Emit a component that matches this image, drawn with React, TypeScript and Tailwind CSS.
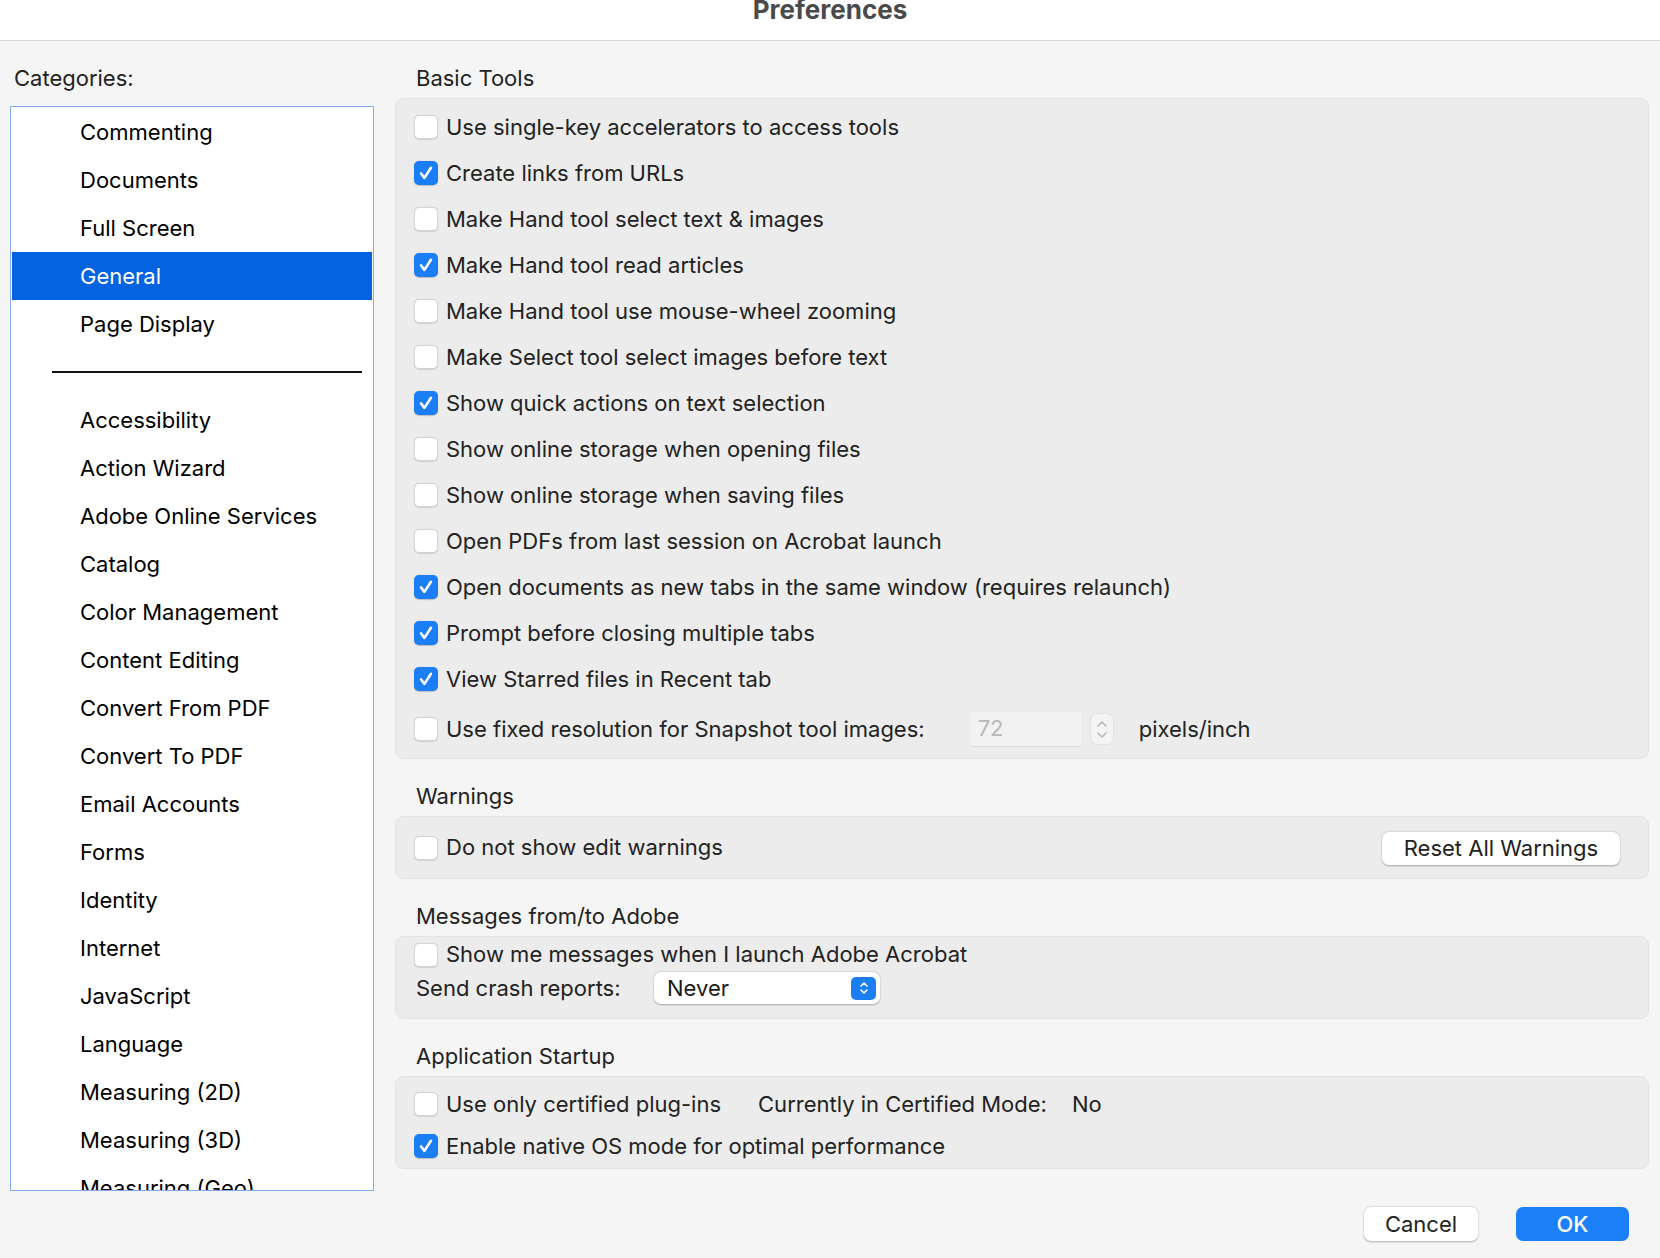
import React, { useState } from "react";

type Option = { label: string; checked: boolean };

const topCategories = ["Commenting", "Documents", "Full Screen", "General", "Page Display"];
const moreCategories = [
    "Accessibility",
    "Action Wizard",
    "Adobe Online Services",
    "Catalog",
    "Color Management",
    "Content Editing",
    "Convert From PDF",
    "Convert To PDF",
    "Email Accounts",
    "Forms",
    "Identity",
    "Internet",
    "JavaScript",
    "Language",
    "Measuring (2D)",
    "Measuring (3D)",
    "Measuring (Geo)",
];

const basicTools: Option[] = [
    { label: "Use single-key accelerators to access tools", checked: false },
    { label: "Create links from URLs", checked: true },
    { label: "Make Hand tool select text & images", checked: false },
    { label: "Make Hand tool read articles", checked: true },
    { label: "Make Hand tool use mouse-wheel zooming", checked: false },
    { label: "Make Select tool select images before text", checked: false },
    { label: "Show quick actions on text selection", checked: true },
    { label: "Show online storage when opening files", checked: false },
    { label: "Show online storage when saving files", checked: false },
    { label: "Open PDFs from last session on Acrobat launch", checked: false },
    { label: "Open documents as new tabs in the same window (requires relaunch)", checked: true },
    { label: "Prompt before closing multiple tabs", checked: true },
    { label: "View Starred files in Recent tab", checked: true },
];

const Checkbox = ({ checked }: { checked: boolean }) =>
    checked ? (
        <span className="w-[24px] h-[24px] shrink-0 rounded-[5px] bg-[#1b7ef5] flex items-center justify-center shadow-[0_0.5px_1px_rgba(0,0,0,0.2)]">
            <svg width="18" height="18" viewBox="0 0 16 16">
                <path
                    d="M3.6 8.4l3 3.9L12.4 3.4"
                    fill="none"
                    stroke="#fff"
                    strokeWidth="2.3"
                    strokeLinecap="round"
                    strokeLinejoin="round"
                />
            </svg>
        </span>
    ) : (
        <span className="w-[24px] h-[24px] shrink-0 rounded-[5px] bg-white border border-[#d4d4d4] shadow-[0_0.5px_1px_rgba(0,0,0,0.12)]" />
    );

const CheckRow = ({ label, checked, className = "h-[46px]" }: Option & { className?: string }) => (
    <div className={`flex items-center gap-[8px] ${className}`}>
        <Checkbox checked={checked} />
        <span>{label}</span>
    </div>
);

const GroupLabel = ({ children }: { children: React.ReactNode }) => (
    <div className="h-[28px] flex items-center pl-[21px]">{children}</div>
);

const Stepper = () => (
    <span className="w-[24px] h-[32px] rounded-[7px] bg-[#f4f4f4] border border-[#e2e2e2] flex flex-col items-center justify-center gap-[3px]">
        <svg width="12" height="8" viewBox="0 0 12 8">
            <path d="M2 6l4-4 4 4" fill="none" stroke="#b4b4b4" strokeWidth="1.5" strokeLinecap="round" />
        </svg>
        <svg width="12" height="8" viewBox="0 0 12 8">
            <path d="M2 2l4 4 4-4" fill="none" stroke="#b4b4b4" strokeWidth="1.5" strokeLinecap="round" />
        </svg>
    </span>
);

const SelectArrows = () => (
    <span className="w-[25px] h-[23px] rounded-[5px] bg-[#1b7ef5] flex flex-col items-center justify-center gap-[2px]">
        <svg width="10" height="6" viewBox="0 0 10 6">
            <path d="M2 5l3-3 3 3" fill="none" stroke="#fff" strokeWidth="1.6" strokeLinecap="round" strokeLinejoin="round" />
        </svg>
        <svg width="10" height="6" viewBox="0 0 10 6">
            <path d="M2 1l3 3 3-3" fill="none" stroke="#fff" strokeWidth="1.6" strokeLinecap="round" strokeLinejoin="round" />
        </svg>
    </span>
);

const App = () => {
    const [active, setActive] = useState("General");

    return (
        <div className="w-[1660px] h-[1258px] overflow-hidden bg-[#f5f5f5] font-[Inter,sans-serif] text-[22px] text-[#222] flex flex-col">
            <div className="h-[41px] shrink-0 bg-white border-b border-[#d6d6d6] flex justify-center">
                <span className="text-[26px] leading-none font-bold text-[#4a4a4a] -mt-[3px]">Preferences</span>
            </div>

            <div className="flex flex-1 pt-[23px] pl-[10px] pr-[11px]">
                {/* categories */}
                <div className="w-[364px] shrink-0 flex flex-col">
                    <div className="h-[28px] flex items-center pl-[4px]">Categories:</div>
                    <div className="mt-[14px] h-[1085px] bg-white border border-[#80acef] p-[1px] overflow-hidden text-black">
                        {topCategories.map(name => (
                            <div
                                key={name}
                                onClick={() => setActive(name)}
                                className={`h-[48px] flex items-center pl-[68px] cursor-default ${
                                    active === name ? "bg-[#0463e1] text-white" : ""
                                }`}
                            >
                                {name}
                            </div>
                        ))}
                        <div className="h-[48px] flex items-center pl-[40px] pr-[10px]">
                            <div className="h-[2px] w-full bg-[#111]" />
                        </div>
                        {moreCategories.map(name => (
                            <div
                                key={name}
                                onClick={() => setActive(name)}
                                className={`h-[48px] flex items-center pl-[68px] cursor-default ${
                                    active === name ? "bg-[#0463e1] text-white" : ""
                                }`}
                            >
                                {name}
                            </div>
                        ))}
                    </div>
                </div>

                {/* settings */}
                <div className="flex-1 ml-[21px] flex flex-col">
                    <GroupLabel>Basic Tools</GroupLabel>
                    <div className="mt-[6px] rounded-[9px] bg-[#ececec] border border-[#e3e3e3] pt-[5px] pb-[6px] pl-[18px]">
                        {basicTools.map(o => (
                            <CheckRow key={o.label} {...o} />
                        ))}
                        <div className="mt-[4px] h-[46px] flex items-center">
                            <CheckRow label="Use fixed resolution for Snapshot tool images:" checked={false} />
                            <span className="ml-[46px] w-[110px] h-[35px] bg-[#f2f2f2] border-b border-[#d9d9d9] flex items-center pl-[7px] text-[#b8b8b8]">
                                72
                            </span>
                            <span className="ml-[9px]">
                                <Stepper />
                            </span>
                            <span className="ml-[25px]">pixels/inch</span>
                        </div>
                    </div>

                    <div className="mt-[23px]">
                        <GroupLabel>Warnings</GroupLabel>
                    </div>
                    <div className="mt-[6px] h-[63px] rounded-[9px] bg-[#ececec] border border-[#e3e3e3] pl-[18px] pr-[28px] flex items-center justify-between">
                        <CheckRow label="Do not show edit warnings" checked={false} />
                        <button className="w-[238px] h-[33px] mt-[1px] rounded-[7px] bg-white text-[#222] shadow-[0_0.5px_2px_rgba(0,0,0,0.3)] flex items-center justify-center">
                            Reset All Warnings
                        </button>
                    </div>

                    <div className="mt-[23px]">
                        <GroupLabel>Messages from/to Adobe</GroupLabel>
                    </div>
                    <div className="mt-[6px] rounded-[9px] bg-[#ececec] border border-[#e3e3e3] pt-[1px] pb-[14px] pl-[18px]">
                        <CheckRow label="Show me messages when I launch Adobe Acrobat" checked={false} className="h-[33px]" />
                        <div className="h-[32px] mt-[1px] flex items-center pl-[2px]">
                            <span className="w-[238px]">Send crash reports:</span>
                            <div className="w-[226px] h-[32px] rounded-[7px] bg-white shadow-[0_0.5px_2px_rgba(0,0,0,0.3)] flex items-center justify-between pl-[13px] pr-[4px]">
                                <span className="text-[#1a1a1a]">Never</span>
                                <SelectArrows />
                            </div>
                        </div>
                    </div>

                    <div className="mt-[23px]">
                        <GroupLabel>Application Startup</GroupLabel>
                    </div>
                    <div className="mt-[6px] rounded-[9px] bg-[#ececec] border border-[#e3e3e3] pt-[6px] pb-[1px] pl-[18px]">
                        <div className="h-[42px] flex items-center">
                            <CheckRow label="Use only certified plug-ins" checked={false} className="h-[42px]" />
                            <span className="ml-[37px]">Currently in Certified Mode:</span>
                            <span className="ml-[25px]">No</span>
                        </div>
                        <CheckRow label="Enable native OS mode for optimal performance" checked className="h-[42px]" />
                    </div>

                    <div className="mt-[38px] flex justify-end gap-[38px] pr-[20px]">
                        <button className="w-[114px] h-[34px] rounded-[7px] bg-white text-[#222] shadow-[0_0.5px_2px_rgba(0,0,0,0.3)]">
                            Cancel
                        </button>
                        <button className="w-[113px] h-[34px] rounded-[7px] bg-[#1b80f8] text-white font-medium">
                            OK
                        </button>
                    </div>
                </div>
            </div>
        </div>
    );
};

export default App;
